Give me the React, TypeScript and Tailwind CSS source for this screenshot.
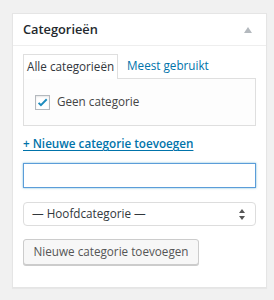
export default function App() {
  return (
    <div className="w-[274px] h-[300px] bg-[#f1f1f1] pt-[13px] pl-[12px] font-['Open_Sans',sans-serif] text-[11.7px] text-[#444]">
      <div className="w-[255px] h-[275px] bg-white border border-[#e5e5e5] shadow-[0_1px_1px_rgba(0,0,0,0.04)]">
        {/* header */}
        <div className="h-[32px] flex items-center justify-between px-[10px] border-b border-[#eee]">
          <h2 className="text-[12.8px] font-semibold text-[#23282d]">Categorieën</h2>
          <span className="w-0 h-0 border-l-[4px] border-r-[4px] border-b-[6px] border-l-transparent border-r-transparent border-b-[#b4b9be] mr-[4px]" />
        </div>

        <div className="px-[10px] pt-[7px]">
          {/* tabs */}
          <div className="flex items-end h-[25px]">
            <div className="h-[25px] px-[3px] whitespace-nowrap flex items-center bg-white border border-[#dfdfdf] border-b-0 text-[#32373c] relative z-10 -mb-px">
              Alle categorieën
            </div>
            <div className="h-[25px] pl-[9px] whitespace-nowrap flex items-center text-[#0073aa]">Meest gebruikt</div>
          </div>
          <div className="h-[48px] border border-[#dfdfdf] bg-[#fdfdfd] flex items-center pl-[11px]">
            <span className="w-[15px] h-[15px] border border-[#b4b9be] bg-white shadow-[inset_0_1px_2px_rgba(0,0,0,0.1)] flex items-center justify-center">
              <svg width="13" height="13" viewBox="0 0 20 20">
                <path d="M4 10.5l3.6 3.6L16.5 5" fill="none" stroke="#1e8cbe" strokeWidth="3" />
              </svg>
            </span>
            <span className="ml-[7px] text-[#444]">Geen categorie</span>
          </div>

          {/* add new */}
          <div className="mt-[10px] h-[16px] flex items-center">
            <a className="text-[#0073aa] font-semibold underline underline-offset-2">+ Nieuwe categorie toevoegen</a>
          </div>
          <div className="mt-[11px] h-[25px] border border-[#5b9dd9] shadow-[0_0_2px_rgba(30,140,190,0.6)] bg-white" />
          <div className="mt-[14px] h-[24px] border border-[#ddd] rounded-[4px] bg-white flex items-center justify-between pl-[8px] pr-[10px] text-[#32373c]">
            <span>— Hoofdcategorie —</span>
            <svg width="6" height="11" viewBox="0 0 6 11">
              <path d="M3 0L6 4H0z M3 11L0 7h6z" fill="#555" />
            </svg>
          </div>
          <div className="mt-[13px] w-[176px] h-[26px] border border-[#ccc] rounded-[3px] bg-[#f7f7f7] shadow-[0_1px_0_#ccc] flex items-center justify-center text-[#555]">
            Nieuwe categorie toevoegen
          </div>
        </div>
      </div>
    </div>
  );
}
